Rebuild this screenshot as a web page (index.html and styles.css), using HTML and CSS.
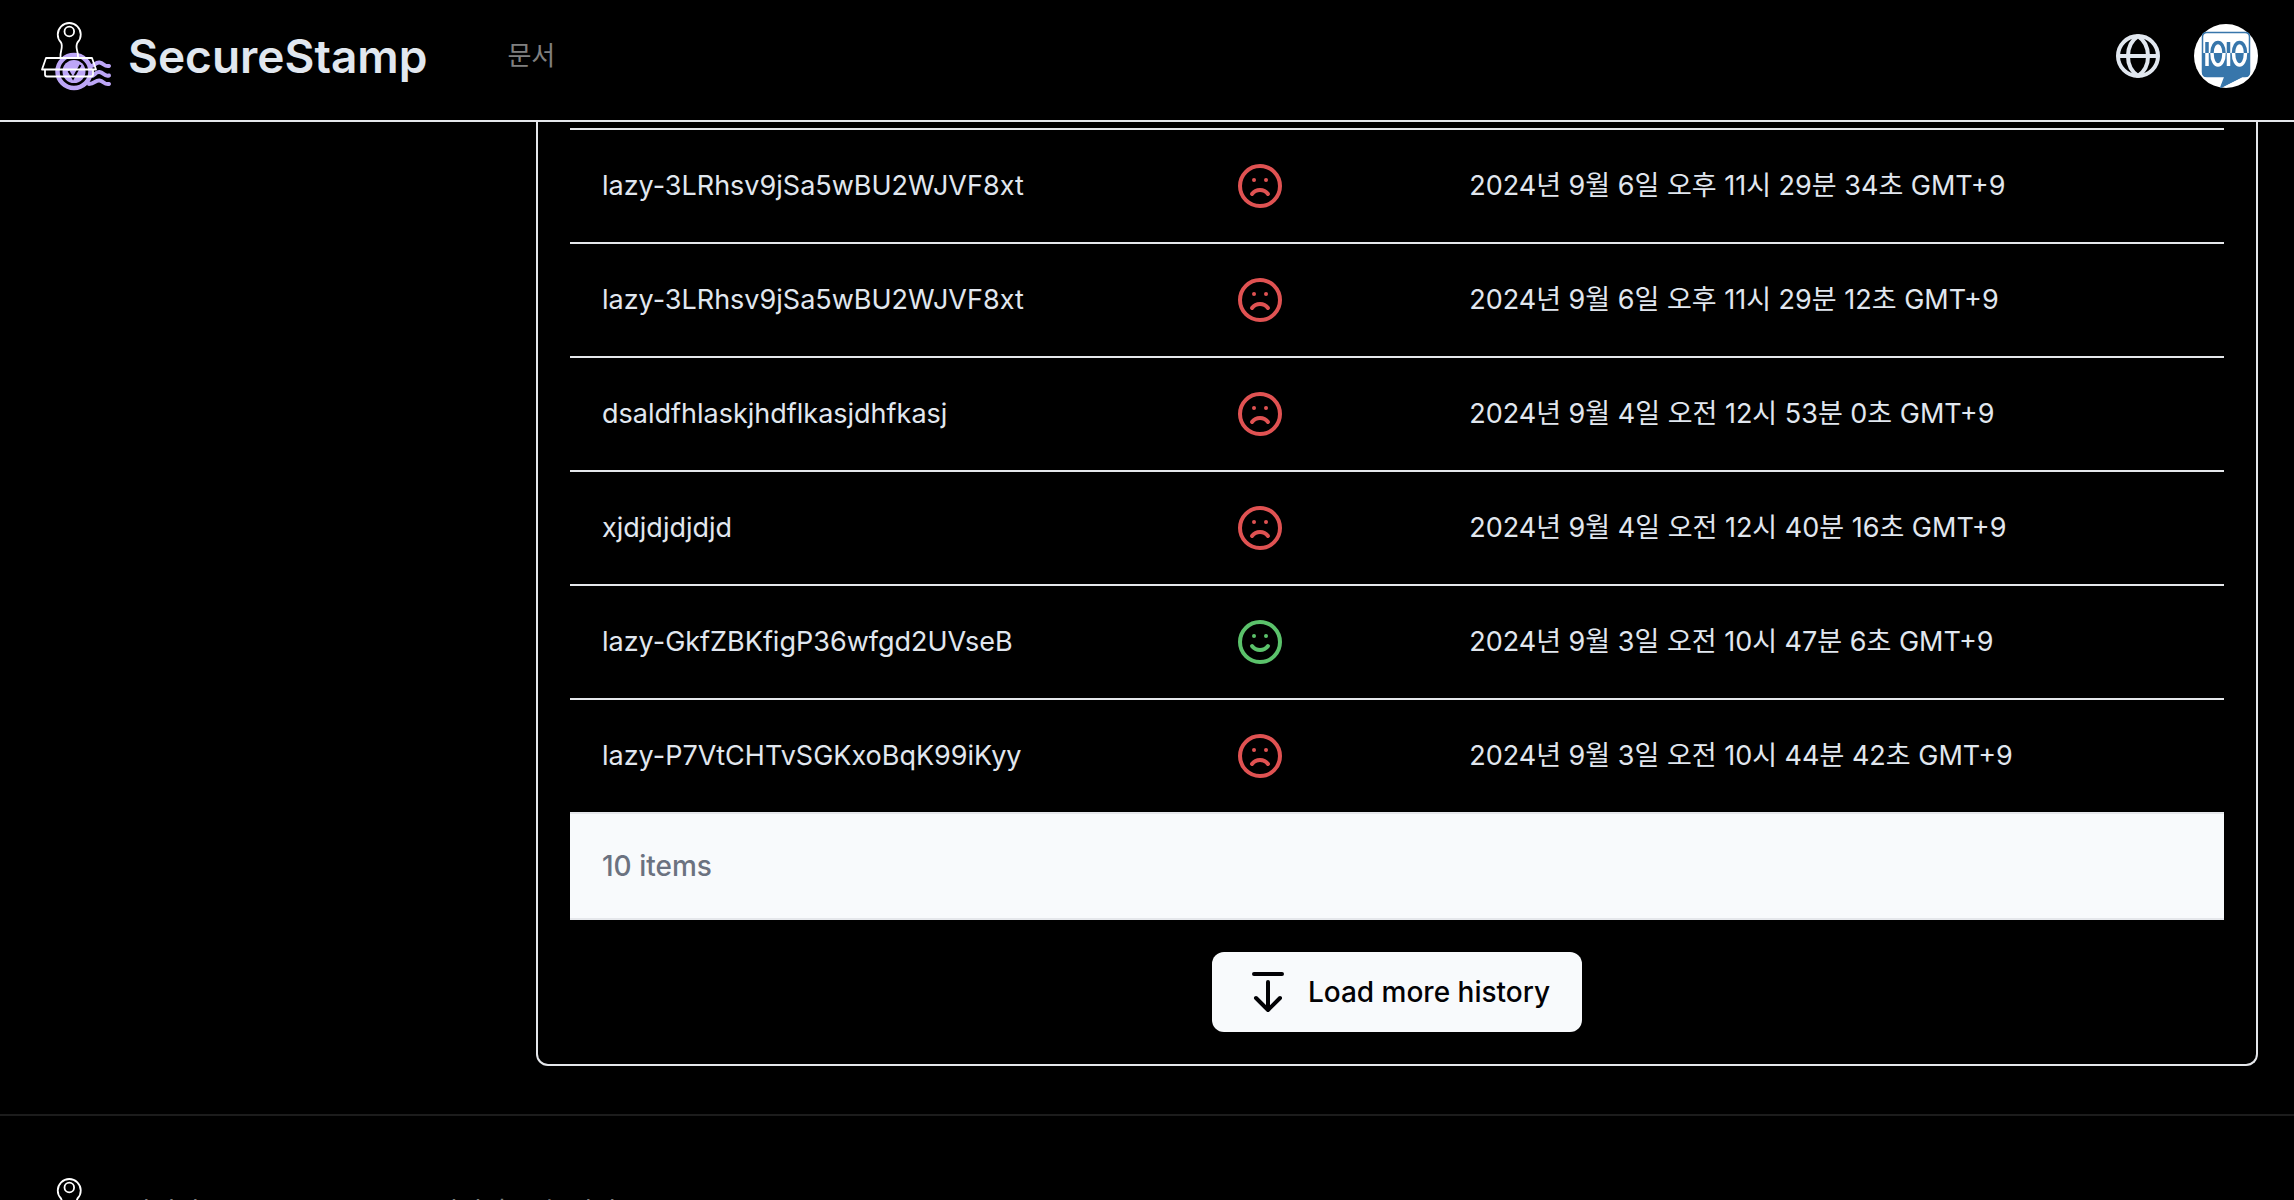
FILE: index.html
```html
<!DOCTYPE html>
<html lang="ko">
<head>
<meta charset="utf-8">
<title>SecureStamp</title>
<link rel="stylesheet" href="styles.css">
</head>
<body>
<svg class="sprite" aria-hidden="true">
  <symbol id="logo" viewBox="0 0 72 72">
    <g fill="none" stroke="#bda6f7" stroke-linecap="round" stroke-linejoin="round">
      <circle cx="34" cy="51.500" r="16.500" stroke-width="4.500"/>
      <path d="M50 46C54 47 55 42 59.500 42.500S64 47 69 46M51 56C55 56 55 51.500 59.500 52S64 57 69 55.500M49 64C55 64 55 60 59.500 60.500S64 65 69 64" stroke-width="4"/>
    </g>
    <circle cx="34" cy="51.500" r="11.500" fill="#bda6f7"/>
    <path d="M28.500 51L33 58.500L40.500 45" fill="none" stroke="#000" stroke-width="2"/>
    <g fill="none" stroke="#fff" stroke-width="1.800" stroke-linejoin="round">
      <path d="M20.500 37C20 31 23.500 27 21 22.500A11.500 11.500 0 1 1 37.500 22.500C34.500 28 38.500 31 38 37"/>
      <circle cx="29.300" cy="11.500" r="4.800"/>
      <path d="M6 38H52L56 49.500H2ZM5 50V54.500Q5 56.500 7 56.500H51Q53 56.500 53 54.500V50"/>
    </g>
  </symbol>
  <symbol id="sad" viewBox="0 0 24 24">
    <g fill="none" stroke="currentColor" stroke-width="2" stroke-linecap="round" stroke-linejoin="round">
      <circle cx="12" cy="12" r="10"/><path d="M8 16s1.500-2 4-2 4 2 4 2M9 9h.01M15 9h.01"/>
    </g>
  </symbol>
  <symbol id="smile" viewBox="0 0 24 24">
    <g fill="none" stroke="currentColor" stroke-width="2" stroke-linecap="round" stroke-linejoin="round">
      <circle cx="12" cy="12" r="10"/><path d="M8 14s1.500 2 4 2 4-2 4-2M9 9h.01M15 9h.01"/>
    </g>
  </symbol>
</svg>

<header class="header">
  <a class="brand" href="#"><svg class="logo" aria-hidden="true"><use href="#logo"/></svg><span>SecureStamp</span></a>
  <nav class="nav"><a href="#">문서</a></nav>
  <div class="actions">
    <button class="icon-button" type="button" aria-label="언어">
      <svg class="icon" viewBox="0 0 24 24" fill="none" stroke="currentColor" stroke-width="2"><circle cx="12" cy="12" r="10"/><path d="M2 12h20M12 2C5.300 6.500 5.300 17.500 12 22M12 2C18.700 6.500 18.700 17.500 12 22"/></svg>
    </button>
    <button class="icon-button" type="button" aria-label="계정">
      <svg class="avatar" viewBox="0 0 64 64">
        <circle cx="32" cy="32" r="32" fill="#fff"/>
        <path d="M13 8.500H51Q55.500 8.500 55.500 13V48Q55.500 52.500 51 52.500H48L27 63L31 52.500H13Q8.500 52.500 8.500 48V13Q8.500 8.500 13 8.500Z" fill="#fff" stroke="#3776ab" stroke-width="1.500"/>
        <path d="M8 29H56V48Q56 53 51 53H48L27 64L31 53H13Q8 53 8 48Z" fill="#3776ab"/>
        <g fill="none" stroke-width="3.500">
          <path d="M13 18V29M34.500 18V29M18 29C18 15 30 15 30 29M39.500 29C39.500 15 51.500 15 51.500 29" stroke="#3776ab"/>
          <path d="M13 29V42M34.500 29V42M18 29C18 45 30 45 30 29M39.500 29C39.500 45 51.500 45 51.500 29" stroke="#fff"/>
        </g>
      </svg>
    </button>
  </div>
</header>

<main class="main">
  <section class="card">
    <table class="history">
      <colgroup><col class="col-name"><col class="col-status"><col></colgroup>
      <tbody>
        <tr><td>lazy-3LRhsv9jSa5wBU2WJVF8xt</td><td><svg class="icon bad" role="img" aria-label="실패"><use href="#sad"/></svg></td><td>2024년 9월 6일 오후 11시 29분 34초 GMT+9</td></tr>
        <tr><td>lazy-3LRhsv9jSa5wBU2WJVF8xt</td><td><svg class="icon bad" role="img" aria-label="실패"><use href="#sad"/></svg></td><td>2024년 9월 6일 오후 11시 29분 12초 GMT+9</td></tr>
        <tr><td>dsaldfhlaskjhdflkasjdhfkasj</td><td><svg class="icon bad" role="img" aria-label="실패"><use href="#sad"/></svg></td><td>2024년 9월 4일 오전 12시 53분 0초 GMT+9</td></tr>
        <tr><td>xjdjdjdjdjd</td><td><svg class="icon bad" role="img" aria-label="실패"><use href="#sad"/></svg></td><td>2024년 9월 4일 오전 12시 40분 16초 GMT+9</td></tr>
        <tr><td>lazy-GkfZBKfigP36wfgd2UVseB</td><td><svg class="icon good" role="img" aria-label="성공"><use href="#smile"/></svg></td><td>2024년 9월 3일 오전 10시 47분 6초 GMT+9</td></tr>
        <tr><td>lazy-P7VtCHTvSGKxoBqK99iKyy</td><td><svg class="icon bad" role="img" aria-label="실패"><use href="#sad"/></svg></td><td>2024년 9월 3일 오전 10시 44분 42초 GMT+9</td></tr>
      </tbody>
      <tfoot><tr><td colspan="3">10 items</td></tr></tfoot>
    </table>
    <button class="load-more" type="button">
      <svg class="icon" viewBox="0 0 24 24" fill="none" stroke="currentColor" stroke-width="2" stroke-linecap="round" stroke-linejoin="round"><path d="M5 3H19M12 7V21M6 15L12 21L18 15"/></svg>
      <span>Load more history</span>
    </button>
  </section>
</main>

<footer class="footer">
  <svg class="logo" aria-hidden="true"><use href="#logo"/></svg>
  <p>라이선스 © SecureStamp 이미지 보호 서비스</p>
</footer>
</body>
</html>
```

FILE: styles.css
```css
* { box-sizing: border-box; }

body {
  margin: 0;
  background: #000;
  color: #e1e7ef;
  font: 28px/40px Inter, "Noto Sans CJK KR", sans-serif;
}

a { color: inherit; text-decoration: none; }
button { font: inherit; border: 0; cursor: pointer; }
svg { display: block; }
.sprite { position: absolute; width: 0; height: 0; }
.icon { width: 48px; height: 48px; flex: none; }
.logo { width: 72px; height: 72px; flex: none; }

.header {
  display: flex;
  align-items: center;
  padding: 20px 36px 28px 40px;
  border-bottom: 2px solid #e5e7eb;
}
.brand {
  display: flex;
  align-items: center;
  gap: 16px;
  font-size: 46px;
  font-weight: 600;
}
.nav { margin-left: 80px; color: #808080; font-size: 26px; }
.actions { display: flex; align-items: center; gap: 32px; margin-left: auto; }
.icon-button { padding: 0; background: none; color: #e1e7ef; }
.avatar { width: 64px; height: 64px; }

.main { padding: 0 36px 48px 536px; }
.card {
  padding: 6px 32px 32px;
  border: 2px solid #e5e7eb;
  border-top: 0;
  border-radius: 0 0 12px 12px;
}
.history { width: 100%; table-layout: fixed; border-spacing: 0; }
.col-name { width: 38.33%; }
.col-status { width: 14.1%; }
.history td { padding: 32px; border-top: 2px solid #e5e7eb; white-space: nowrap; }
.history tbody td { height: 114px; font-size: 27px; }
.history tfoot td {
  background: #f8fafc;
  border-bottom: 2px solid #e5e7eb;
  color: #6b7280;
  font-weight: 500;
}
.bad { color: #e05252; }
.good { color: #5bc26b; }

.load-more {
  display: flex;
  align-items: center;
  gap: 16px;
  margin: 32px auto 0;
  padding: 16px 32px;
  border-radius: 12px;
  background: #f8fafc;
  color: #020205;
  font-weight: 500;
}

.footer {
  display: flex;
  align-items: center;
  gap: 16px;
  padding: 60px 40px;
  border-top: 2px solid #1c1c1c;
}
.footer p { margin: 0; color: #808080; font-size: 26px; }
```
